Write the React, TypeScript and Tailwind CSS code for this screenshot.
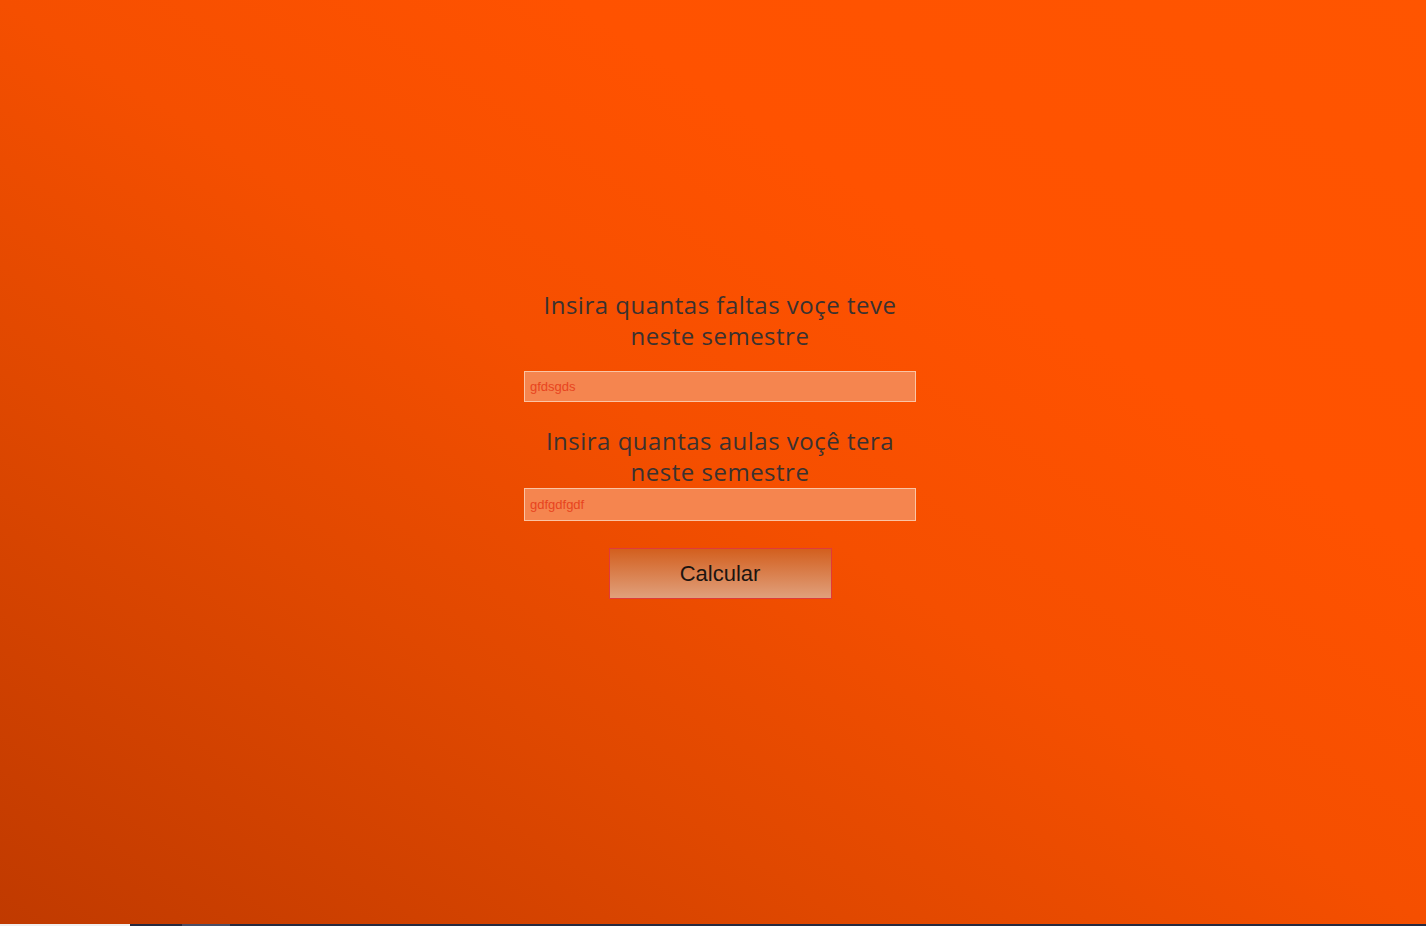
import React, { useState } from 'react';

const App: React.FC = () => {
  const [faltas, setFaltas] = useState('gfdsgds');
  const [aulas, setAulas] = useState('gdfgdfgdf');

  return (
    <div className="w-full h-[926px] flex flex-col overflow-hidden">
      <div className="flex-1 flex flex-col items-center pl-[14px] pt-[289px] bg-[linear-gradient(to_top_right,#c03a00_0%,#e04800_30%,#f54f00_50%,#ff5200_70%,#ff5500_100%)]">
        <h2 className="w-[400px] text-center text-[24px] leading-[31px] tracking-[0.5px] text-[#3a3230] font-['Open_Sans',sans-serif] font-medium">
          Insira quantas faltas voçe teve neste semestre
        </h2>
        <input
          value={faltas}
          onChange={(e) => setFaltas(e.target.value)}
          className="mt-[20px] w-[392px] h-[31px] px-[5px] bg-[#f5854f] border border-[#fbc4a4] text-[#e8441e] text-[13px] font-['Liberation_Sans',Arial,sans-serif] outline-none"
        />
        <h2 className="mt-[23px] w-[400px] text-center text-[24px] leading-[31px] tracking-[0.5px] text-[#3a3230] font-['Open_Sans',sans-serif] font-medium">
          Insira quantas aulas voçê tera neste semestre
        </h2>
        <input
          value={aulas}
          onChange={(e) => setAulas(e.target.value)}
          className="mt-[1px] w-[392px] h-[33px] px-[5px] bg-[#f5854f] border border-[#fbc4a4] text-[#e8441e] text-[13px] font-['Liberation_Sans',Arial,sans-serif] outline-none"
        />
        <button className="mt-[27px] w-[223px] h-[51px] border border-[#e03a3a] bg-[linear-gradient(to_bottom,#d35f1e,#e0a07c)] text-[22px] text-[#1c1410] font-['Liberation_Sans',Arial,sans-serif]">
          Calcular
        </button>
      </div>
      <div className="h-[2px] flex">
        <div className="w-[130px] bg-[#f0f0f0]" />
        <div className="w-[52px] bg-[#262a40]" />
        <div className="w-[48px] bg-[#4a4e66]" />
        <div className="flex-1 bg-[#262a40]" />
      </div>
    </div>
  );
};

export default App;
